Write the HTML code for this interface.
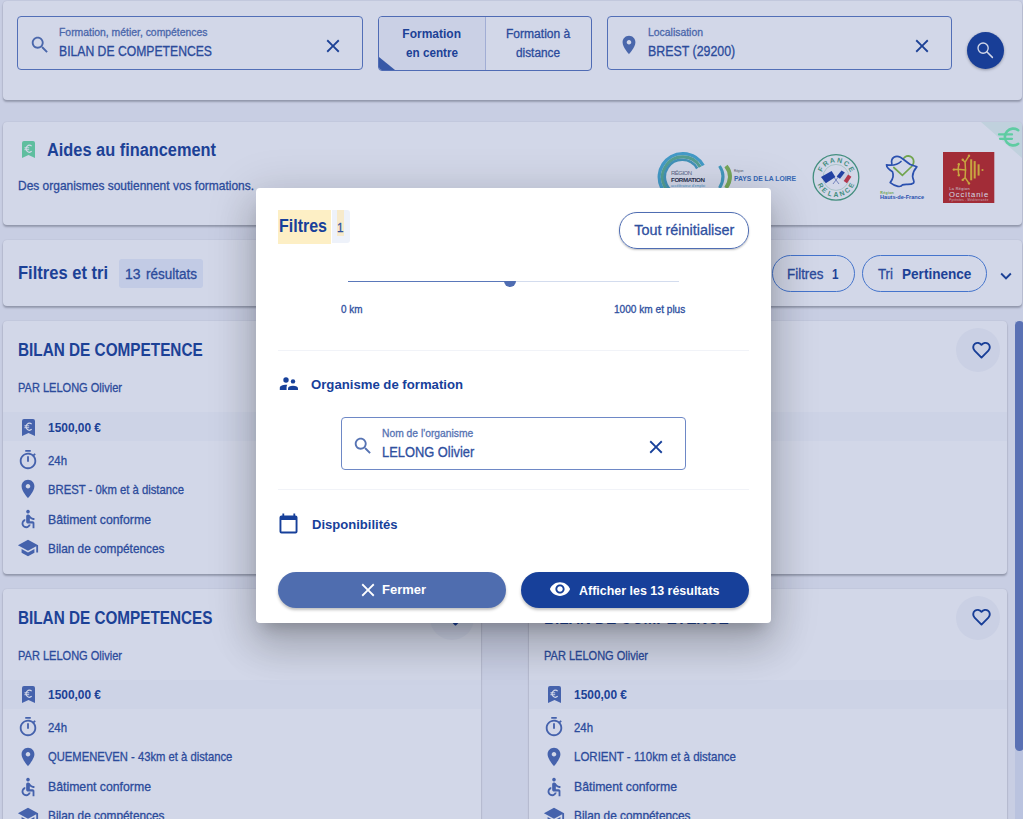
<!DOCTYPE html>
<html><head><meta charset="utf-8"><style>
html,body{margin:0;padding:0;width:1023px;height:819px;overflow:hidden;background:#F3F4F9;font-family:"Liberation Sans",sans-serif;}
.abs,.card,.inp,.pill,.t,.ic{position:absolute;}
.t{white-space:nowrap;transform-origin:0 0;}
.card{background:#FFFFFF;border-radius:4px;box-shadow:0 2px 2px rgba(0,0,0,.26),0 0 1.5px rgba(0,0,0,.14);}
.inp{box-sizing:border-box;border:1px solid #5F7DC2;border-radius:4px;}
.pill{box-sizing:border-box;border:1px solid #4F84DC;border-radius:19px;}
#ov{position:absolute;left:0;top:0;width:1023px;height:819px;background:rgba(30,55,140,.2);}
#modal{position:absolute;left:256px;top:188px;width:515px;height:434.5px;background:#fff;border-radius:4px;
box-shadow:0 11px 15px -7px rgba(0,0,0,.2),0 24px 38px 3px rgba(0,0,0,.14),0 9px 46px 8px rgba(0,0,0,.12);}
</style></head><body>
<div class='card' style='left:3px;top:1px;width:1019px;height:99px'></div><div class='inp' style='left:17px;top:16px;width:346px;height:54px'></div><svg class='ic' style='left:29.40px;top:33.90px;' width='22' height='22' viewBox='0 0 24 24'><path fill='#5673B3' d='M15.5 14h-.79l-.28-.27C15.41 12.59 16 11.11 16 9.5 16 5.91 13.09 3 9.5 3S3 5.91 3 9.5 5.91 16 9.5 16c1.610 0 3.09-.59 4.23-1.57l.27.28v.79l5 4.99L20.49 19l-4.99-5zm-6 0C7.01 14 5 11.99 5 9.5S7.01 5 9.5 5 14 7.01 14 9.5 11.99 14 9.5 14z'/></svg><svg class='ic' style='left:322.00px;top:35.00px;' width='22' height='22' viewBox='0 0 24 24'><path fill='#1C4499' d='M19 6.41L17.59 5 12 10.59 6.41 5 5 6.41 10.59 12 5 17.59 6.41 19 12 13.41 17.59 19 19 17.59 13.41 12z'/></svg><div class='abs' style='left:378px;top:16px;width:214px;height:55px;border:1px solid #5C79BF;border-radius:4px;box-sizing:border-box;overflow:hidden'><div style='position:absolute;left:0;top:0;width:106px;height:100%;background:#F6F7FC;border-right:1px solid #C2CBE6'></div><div style='position:absolute;left:0;bottom:0;width:0;height:0;border-style:solid;border-width:13px 0 0 16px;border-color:transparent transparent transparent #3F62AE'></div></div><div class='inp' style='left:606.5px;top:16px;width:345px;height:54px'></div><svg class='ic' style='left:618.40px;top:34.40px;' width='22' height='22' viewBox='0 0 24 24'><path fill='#5673B3' d='M12 2C8.13 2 5 5.13 5 9c0 5.25 7 13 7 13s7-7.75 7-13c0-3.87-3.13-7-7-7zm0 9.5c-1.38 0-2.5-1.12-2.5-2.5s1.12-2.5 2.5-2.5 2.5 1.12 2.5 2.5-1.12 2.5-2.5 2.5z'/></svg><svg class='ic' style='left:910.70px;top:35.00px;' width='22' height='22' viewBox='0 0 24 24'><path fill='#1C4499' d='M19 6.41L17.59 5 12 10.59 6.41 5 5 6.41 10.59 12 5 17.59 6.41 19 12 13.41 17.59 19 19 17.59 13.41 12z'/></svg><div class='abs' style='left:967px;top:32px;width:37px;height:37px;border-radius:50%;background:#17409A;box-shadow:0 1px 3px rgba(0,0,0,.35)'></div><svg class='ic' style='left:974px;top:40px' width='22' height='22' viewBox='0 0 22 22'><circle cx='9.1' cy='8.1' r='5.1' fill='none' stroke='#fff' stroke-width='1.35'/><path d='M12.8 11.8L18.4 17.4' stroke='#fff' stroke-width='1.5' stroke-linecap='round'/></svg><div class='card' style='left:3px;top:122px;width:1019px;height:103px;overflow:hidden'><div style='position:absolute;right:0;top:0;width:0;height:0;border-style:solid;border-width:0 41px 36px 0;border-color:transparent #E9F8F2 transparent transparent'></div></div><svg class='ic' style='left:996px;top:124px' width='26' height='26' viewBox='0 0 26 26'><path d='M22.2 6.2 A8.4 8.4 0 1 0 22.2 19.8' fill='none' stroke='#6FF2A8' stroke-width='2.6' stroke-linecap='round'/><path d='M3 10.4h13M4 14.8h12' stroke='#6FF2A8' stroke-width='2.3' stroke-linecap='round'/></svg><svg class='ic' style='left:22.00px;top:140.80px' width='13' height='17' viewBox='0 0 13 17'><path fill='#70E0A4' d='M2 0h9a2 2 0 0 1 2 2v15l-6.5-3-6.5 3V2a2 2 0 0 1 2-2z'/><path fill='none' stroke='#fff' stroke-width='1.15' d='M9.7 5.1A3.4 3.4 0 1 0 9.7 10.3'/><path stroke='#fff' stroke-width='0.95' d='M2.4 6.8h4.8M2.4 8.7h4.8'/></svg><svg class='ic' style='left:650px;top:145px' width='60' height='45' viewBox='0 0 60 45'>
<path d='M53.2 20.5 A23.5 23.5 0 1 0 30.3 55.5' fill='none' stroke='#4DB3D6' stroke-width='3.4'/>
<path d='M50.2 22 A20.2 20.2 0 1 0 30.3 52.2' fill='none' stroke='#62B894' stroke-width='3.2'/>
<path d='M47.2 23.5 A17.3 17.3 0 1 0 30.3 49.3' fill='none' stroke='#4BA8C4' stroke-width='2.6'/>
<text x='21' y='29.5' font-family='Liberation Sans' font-size='6' fill='#6A6F80' textLength='21'>RÉGION</text>
<text x='21' y='36.5' font-family='Liberation Sans' font-size='6.2' font-weight='700' fill='#2C3140' textLength='34'>FORMATION</text>
<text x='21' y='41.5' font-family='Liberation Sans' font-size='3.5' fill='#4A9FD0' textLength='34'>accélérateur d'emploi</text>
</svg><svg class='ic' style='left:715px;top:160px' width='85' height='30' viewBox='0 0 85 30'>
<path d='M4.5 6 Q11.5 16 4.5 28' fill='none' stroke='#4AAFC8' stroke-width='3'/>
<path d='M11 6 Q19 16 11 28' fill='none' stroke='#8DC24E' stroke-width='4'/>
<text x='19' y='12' font-family='Liberation Sans' font-size='3' fill='#555'>Région</text>
<text x='19' y='20.6' font-family='Liberation Sans' font-size='7.6' font-weight='700' fill='#3C74BE' textLength='62' lengthAdjust='spacingAndGlyphs'>PAYS DE LA LOIRE</text>
</svg><svg class='ic' style='left:810px;top:151px' width='52' height='52' viewBox='0 0 52 52'>

<circle cx='26' cy='26.4' r='22.8' fill='none' stroke='#4DA57C' stroke-width='1.3'/>
<circle cx='26' cy='26.4' r='13' fill='none' stroke='#A9D6BE' stroke-width='0.6'/>
<text x='12.76' y='19.36' transform='rotate(-62.0 12.76 19.36)' text-anchor='middle' font-family='Liberation Sans' font-size='7.0' font-weight='700' fill='#4DA57C'>F</text><text x='16.93' y='14.45' transform='rotate(-37.2 16.93 14.45)' text-anchor='middle' font-family='Liberation Sans' font-size='7.0' font-weight='700' fill='#4DA57C'>R</text><text x='22.78' y='11.75' transform='rotate(-12.4 22.78 11.75)' text-anchor='middle' font-family='Liberation Sans' font-size='7.0' font-weight='700' fill='#4DA57C'>A</text><text x='29.22' y='11.75' transform='rotate(12.4 29.22 11.75)' text-anchor='middle' font-family='Liberation Sans' font-size='7.0' font-weight='700' fill='#4DA57C'>N</text><text x='35.07' y='14.45' transform='rotate(37.2 35.07 14.45)' text-anchor='middle' font-family='Liberation Sans' font-size='7.0' font-weight='700' fill='#4DA57C'>C</text><text x='39.24' y='19.36' transform='rotate(62.0 39.24 19.36)' text-anchor='middle' font-family='Liberation Sans' font-size='7.0' font-weight='700' fill='#4DA57C'>E</text>
<text x='8.69' y='35.60' transform='rotate(62.0 8.69 35.60)' text-anchor='middle' font-family='Liberation Sans' font-size='6.8' font-weight='700' fill='#4DA57C'>R</text><text x='13.06' y='41.12' transform='rotate(41.3 13.06 41.12)' text-anchor='middle' font-family='Liberation Sans' font-size='6.8' font-weight='700' fill='#4DA57C'>E</text><text x='19.08' y='44.74' transform='rotate(20.7 19.08 44.74)' text-anchor='middle' font-family='Liberation Sans' font-size='6.8' font-weight='700' fill='#4DA57C'>L</text><text x='26.00' y='46.00' transform='rotate(0.0 26.00 46.00)' text-anchor='middle' font-family='Liberation Sans' font-size='6.8' font-weight='700' fill='#4DA57C'>A</text><text x='32.92' y='44.74' transform='rotate(-20.7 32.92 44.74)' text-anchor='middle' font-family='Liberation Sans' font-size='6.8' font-weight='700' fill='#4DA57C'>N</text><text x='38.94' y='41.12' transform='rotate(-41.3 38.94 41.12)' text-anchor='middle' font-family='Liberation Sans' font-size='6.8' font-weight='700' fill='#4DA57C'>C</text><text x='43.31' y='35.60' transform='rotate(-62.0 43.31 35.60)' text-anchor='middle' font-family='Liberation Sans' font-size='6.8' font-weight='700' fill='#4DA57C'>E</text>
<path d='M23 25 L29 33 M29 25 L23 33' stroke='#7F8CC4' stroke-width='0.9'/>
<path d='M11 26 L21.6 19.9 L25.4 26 L15.8 32.2z' fill='#2344A8'/>
<path d='M26.7 25.4 L31.5 19.5 L41.4 25.7 L37 32.2z' fill='#F4F4F6'/>
<path d='M26.7 25.4 L31.5 19.5 L34.8 21.6 L30 27.7z' fill='#2344A8'/>
<path d='M38.1 23.6 L41.4 25.7 L37 32.2 L33.7 30.1z' fill='#D8393E'/>
</svg><svg class='ic' style='left:878px;top:153px' width='50' height='50' viewBox='0 0 50 50'>
<path d='M 15.8 14.5 L 24.4 22.4 L 33.6 13.5 C 37.6 8.9 35.6 3.6 30.3 2.9 C 27.7 2.9 25.7 4.9 25.7 5.6' fill='none' stroke='#86C03F' stroke-width='1.7' stroke-linecap='round'/>
<path d='M 8.5 11.8 C 14.5 12.8 19.8 11.5 23.0 8.5 M 13.8 10.5 C 12.5 4.9 17.8 1.6 22.4 4.3 C 25.7 6.2 29.0 9.5 32.3 11.5 L 38.9 13.8 C 36.9 16.1 34.9 18.1 34.6 23.4 C 34.9 26.7 36.9 28.6 35.6 30.0 C 32.3 32.6 27.7 30.6 24.4 31.9 C 23.0 34.6 17.8 33.9 12.2 29.6 C 15.1 26.0 15.8 22.0 14.5 18.8 C 11.2 16.8 8.5 14.8 8.5 11.8' fill='none' stroke='#2E57B8' stroke-width='1.7' stroke-linejoin='round' stroke-linecap='round'/>
<text x='2.3' y='40.6' font-family='Liberation Sans' font-size='3.6' font-weight='700' fill='#86C03F' textLength='13.5'>Région</text>
<text x='2' y='46.4' font-family='Liberation Sans' font-size='5.6' font-weight='700' fill='#2E57B8' textLength='44'>Hauts-de-France</text>
</svg><svg class='ic' style='left:943px;top:152px' width='52' height='52' viewBox='0 0 52 52'>
<rect width='51.3' height='51' fill='#C42A22'/>
<g fill='none' stroke='#F2C22E' stroke-width='1.5' stroke-linecap='round' stroke-linejoin='round'>
<path d='M22.5 18 L22.1 10.2 L19.7 7.7 M22.1 10.2 L26 3.8'/>
<path d='M22.5 18 L15.1 17.2 L15.8 12.3 M15.1 17.2 L10.8 17.6 M15.1 17.2 L15.8 23.3'/>
<path d='M22.5 18 L22.1 25.7 L19.7 27.9 M22.1 25.7 L26 31.4'/>
</g>
<g fill='#F2C22E'><circle cx='19.7' cy='7.7' r='1.2'/><circle cx='26' cy='3.8' r='1.2'/><circle cx='15.8' cy='12.3' r='1.2'/><circle cx='10.8' cy='17.6' r='1.2'/><circle cx='15.8' cy='23.3' r='1.2'/><circle cx='19.7' cy='27.9' r='1.2'/><circle cx='26' cy='31.4' r='1.2'/><circle cx='39.5' cy='18' r='1.1'/>
<rect x='27.2' y='7.3' width='2' height='21'/><rect x='30.7' y='9.1' width='2' height='17.4'/><rect x='34.6' y='12.3' width='2' height='11.3'/></g>
<text x='6.2' y='37.8' font-family='Liberation Sans' font-size='3.8' fill='#F3E6E2' textLength='20.5'>La Région</text>
<text x='6' y='44.9' font-family='Liberation Sans' font-size='7.6' fill='#FFFFFF' textLength='39.2'>Occitanie</text>
<text x='6.2' y='48.6' font-family='Liberation Sans' font-size='2.8' fill='#F3D6D2' textLength='39'>Pyrénées - Méditerranée</text>
</svg><div class='card' style='left:3px;top:240px;width:1019px;height:66px'></div><div class='abs' style='left:119px;top:259px;width:84px;height:28.8px;background:#EBF0FC;border-radius:3px'></div><div class='pill' style='left:771.6px;top:255px;width:83px;height:36.6px'></div><div class='pill' style='left:862px;top:255px;width:125px;height:36.6px'></div><svg class='ic' style='left:994.50px;top:264.60px;' width='22' height='22' viewBox='0 0 24 24'><path fill='#1C4499' d='M16.59 8.59L12 13.17 7.41 8.59 6 10l6 6 6-6z'/></svg><div class='card' style='left:3px;top:321.4px;width:478px;height:252.5px;overflow:hidden'><div style='position:absolute;left:0;top:91px;width:100%;height:29px;background:#F9FAFD'></div></div><div class='abs' style='left:430.2px;top:328.29999999999995px;width:44px;height:44px;border-radius:50%;background:#F6F7FB'></div><svg class='ic' style='left:446.0px;top:341.0px' width='19' height='18' viewBox='0 0 19 18'><path fill='none' stroke='#17409A' stroke-width='1.9' stroke-linejoin='round' d='M9.5 16.6L2.6 9.6C0.6 7.6 0.8 4.4 2.9 2.8 4.9 1.3 7.7 1.7 9.5 3.8 11.3 1.7 14.1 1.3 16.1 2.8 18.2 4.4 18.4 7.6 16.4 9.6z'/></svg><svg class='ic' style='left:22.00px;top:418.70px' width='13' height='17' viewBox='0 0 13 17'><path fill='#4F6DB5' d='M2 0h9a2 2 0 0 1 2 2v15l-6.5-3-6.5 3V2a2 2 0 0 1 2-2z'/><path fill='none' stroke='#fff' stroke-width='1.15' d='M9.7 5.1A3.4 3.4 0 1 0 9.7 10.3'/><path stroke='#fff' stroke-width='0.95' d='M2.4 6.8h4.8M2.4 8.7h4.8'/></svg><svg class='ic' style='left:17.00px;top:448.90px;' width='22' height='22' viewBox='0 0 24 24'><path fill='#4F6DB5' d='M15 1H9v2h6V1zm-4 13h2V8h-2v6zm8.03-6.61l1.42-1.42c-.43-.51-.9-.99-1.41-1.41l-1.42 1.42C16.07 4.74 14.12 4 12 4c-4.970 0-9 4.03-9 9s4.02 9 9 9 9-4.03 9-9c0-2.12-.74-4.07-1.97-5.61zM12 20c-3.87 0-7-3.13-7-7s3.13-7 7-7 7 3.13 7 7-3.13 7-7 7z'/></svg><svg class='ic' style='left:17.00px;top:478.30px;' width='22' height='22' viewBox='0 0 24 24'><path fill='#4F6DB5' d='M12 2C8.13 2 5 5.13 5 9c0 5.25 7 13 7 13s7-7.75 7-13c0-3.87-3.13-7-7-7zm0 9.5c-1.38 0-2.5-1.12-2.5-2.5s1.12-2.5 2.5-2.5 2.5 1.12 2.5 2.5-1.12 2.5-2.5 2.5z'/></svg><svg class='ic' style='left:17.00px;top:508.20px;' width='22' height='22' viewBox='0 0 24 24'><path fill='#4F6DB5' d='M12 2a2 2 0 1 0 0.001 0zM19 13v-2c-1.54.02-3.09-.75-4.07-1.83l-1.29-1.43c-.17-.19-.38-.34-.61-.45-.01 0-.01-.01-.02-.01H13c-.35-.2-.75-.3-1.19-.26C10.76 7.11 10 8.04 10 9.09V15c0 1.1.9 2 2 2h5v5h2v-5.5c0-1.1-.9-2-2-2h-3v-3.45c1.29 1.07 3.25 1.94 5 1.95zm-6.17 5c-.41 1.16-1.52 2-2.830 2-1.66 0-3-1.34-3-3 0-1.31.84-2.41 2-2.83V12.1c-2.28.46-4 2.48-4 4.9 0 2.76 2.24 5 5 5 2.42 0 4.44-1.72 4.9-4h-2.07z'/></svg><svg class='ic' style='left:17.00px;top:537.30px;' width='22' height='22' viewBox='0 0 24 24'><path fill='#4F6DB5' d='M5 13.18v4L12 21l7-3.82v-4L12 17l-7-3.82zM12 3L1 9l11 6 9-4.91V17h2V9L12 3z'/></svg><div class='card' style='left:529px;top:321.4px;width:478px;height:252.5px;overflow:hidden'><div style='position:absolute;left:0;top:91px;width:100%;height:29px;background:#F9FAFD'></div></div><div class='abs' style='left:956.2px;top:328.29999999999995px;width:44px;height:44px;border-radius:50%;background:#F6F7FB'></div><svg class='ic' style='left:972.0px;top:341.0px' width='19' height='18' viewBox='0 0 19 18'><path fill='none' stroke='#17409A' stroke-width='1.9' stroke-linejoin='round' d='M9.5 16.6L2.6 9.6C0.6 7.6 0.8 4.4 2.9 2.8 4.9 1.3 7.7 1.7 9.5 3.8 11.3 1.7 14.1 1.3 16.1 2.8 18.2 4.4 18.4 7.6 16.4 9.6z'/></svg><svg class='ic' style='left:548.00px;top:418.70px' width='13' height='17' viewBox='0 0 13 17'><path fill='#4F6DB5' d='M2 0h9a2 2 0 0 1 2 2v15l-6.5-3-6.5 3V2a2 2 0 0 1 2-2z'/><path fill='none' stroke='#fff' stroke-width='1.15' d='M9.7 5.1A3.4 3.4 0 1 0 9.7 10.3'/><path stroke='#fff' stroke-width='0.95' d='M2.4 6.8h4.8M2.4 8.7h4.8'/></svg><svg class='ic' style='left:543.00px;top:448.90px;' width='22' height='22' viewBox='0 0 24 24'><path fill='#4F6DB5' d='M15 1H9v2h6V1zm-4 13h2V8h-2v6zm8.03-6.61l1.42-1.42c-.43-.51-.9-.99-1.41-1.41l-1.42 1.42C16.07 4.74 14.12 4 12 4c-4.970 0-9 4.03-9 9s4.02 9 9 9 9-4.03 9-9c0-2.12-.74-4.07-1.97-5.61zM12 20c-3.87 0-7-3.13-7-7s3.13-7 7-7 7 3.13 7 7-3.13 7-7 7z'/></svg><svg class='ic' style='left:543.00px;top:478.30px;' width='22' height='22' viewBox='0 0 24 24'><path fill='#4F6DB5' d='M12 2C8.13 2 5 5.13 5 9c0 5.25 7 13 7 13s7-7.75 7-13c0-3.87-3.13-7-7-7zm0 9.5c-1.38 0-2.5-1.12-2.5-2.5s1.12-2.5 2.5-2.5 2.5 1.12 2.5 2.5-1.12 2.5-2.5 2.5z'/></svg><svg class='ic' style='left:543.00px;top:508.20px;' width='22' height='22' viewBox='0 0 24 24'><path fill='#4F6DB5' d='M12 2a2 2 0 1 0 0.001 0zM19 13v-2c-1.54.02-3.09-.75-4.07-1.83l-1.29-1.43c-.17-.19-.38-.34-.61-.45-.01 0-.01-.01-.02-.01H13c-.35-.2-.75-.3-1.19-.26C10.76 7.11 10 8.04 10 9.09V15c0 1.1.9 2 2 2h5v5h2v-5.5c0-1.1-.9-2-2-2h-3v-3.45c1.29 1.07 3.25 1.94 5 1.95zm-6.17 5c-.41 1.16-1.52 2-2.830 2-1.66 0-3-1.34-3-3 0-1.31.84-2.41 2-2.83V12.1c-2.28.46-4 2.48-4 4.9 0 2.76 2.24 5 5 5 2.42 0 4.44-1.72 4.9-4h-2.07z'/></svg><svg class='ic' style='left:543.00px;top:537.30px;' width='22' height='22' viewBox='0 0 24 24'><path fill='#4F6DB5' d='M5 13.18v4L12 21l7-3.82v-4L12 17l-7-3.82zM12 3L1 9l11 6 9-4.91V17h2V9L12 3z'/></svg><div class='card' style='left:3px;top:588.8px;width:478px;height:252.5px;overflow:hidden'><div style='position:absolute;left:0;top:91px;width:100%;height:29px;background:#F9FAFD'></div></div><div class='abs' style='left:430.2px;top:595.6999999999999px;width:44px;height:44px;border-radius:50%;background:#F6F7FB'></div><svg class='ic' style='left:446.0px;top:608.4px' width='19' height='18' viewBox='0 0 19 18'><path fill='none' stroke='#17409A' stroke-width='1.9' stroke-linejoin='round' d='M9.5 16.6L2.6 9.6C0.6 7.6 0.8 4.4 2.9 2.8 4.9 1.3 7.7 1.7 9.5 3.8 11.3 1.7 14.1 1.3 16.1 2.8 18.2 4.4 18.4 7.6 16.4 9.6z'/></svg><svg class='ic' style='left:22.00px;top:686.10px' width='13' height='17' viewBox='0 0 13 17'><path fill='#4F6DB5' d='M2 0h9a2 2 0 0 1 2 2v15l-6.5-3-6.5 3V2a2 2 0 0 1 2-2z'/><path fill='none' stroke='#fff' stroke-width='1.15' d='M9.7 5.1A3.4 3.4 0 1 0 9.7 10.3'/><path stroke='#fff' stroke-width='0.95' d='M2.4 6.8h4.8M2.4 8.7h4.8'/></svg><svg class='ic' style='left:17.00px;top:716.30px;' width='22' height='22' viewBox='0 0 24 24'><path fill='#4F6DB5' d='M15 1H9v2h6V1zm-4 13h2V8h-2v6zm8.03-6.61l1.42-1.42c-.43-.51-.9-.99-1.41-1.41l-1.42 1.42C16.07 4.74 14.12 4 12 4c-4.970 0-9 4.03-9 9s4.02 9 9 9 9-4.03 9-9c0-2.12-.74-4.07-1.97-5.61zM12 20c-3.87 0-7-3.13-7-7s3.13-7 7-7 7 3.13 7 7-3.13 7-7 7z'/></svg><svg class='ic' style='left:17.00px;top:745.70px;' width='22' height='22' viewBox='0 0 24 24'><path fill='#4F6DB5' d='M12 2C8.13 2 5 5.13 5 9c0 5.25 7 13 7 13s7-7.75 7-13c0-3.87-3.13-7-7-7zm0 9.5c-1.38 0-2.5-1.12-2.5-2.5s1.12-2.5 2.5-2.5 2.5 1.12 2.5 2.5-1.12 2.5-2.5 2.5z'/></svg><svg class='ic' style='left:17.00px;top:775.60px;' width='22' height='22' viewBox='0 0 24 24'><path fill='#4F6DB5' d='M12 2a2 2 0 1 0 0.001 0zM19 13v-2c-1.54.02-3.09-.75-4.07-1.83l-1.29-1.43c-.17-.19-.38-.34-.61-.45-.01 0-.01-.01-.02-.01H13c-.35-.2-.75-.3-1.19-.26C10.76 7.11 10 8.04 10 9.09V15c0 1.1.9 2 2 2h5v5h2v-5.5c0-1.1-.9-2-2-2h-3v-3.45c1.29 1.07 3.25 1.94 5 1.95zm-6.17 5c-.41 1.16-1.52 2-2.830 2-1.66 0-3-1.34-3-3 0-1.31.84-2.41 2-2.83V12.1c-2.28.46-4 2.48-4 4.9 0 2.76 2.24 5 5 5 2.42 0 4.44-1.72 4.9-4h-2.07z'/></svg><svg class='ic' style='left:17.00px;top:804.70px;' width='22' height='22' viewBox='0 0 24 24'><path fill='#4F6DB5' d='M5 13.18v4L12 21l7-3.82v-4L12 17l-7-3.82zM12 3L1 9l11 6 9-4.91V17h2V9L12 3z'/></svg><div class='card' style='left:529px;top:588.8px;width:478px;height:252.5px;overflow:hidden'><div style='position:absolute;left:0;top:91px;width:100%;height:29px;background:#F9FAFD'></div></div><div class='abs' style='left:956.2px;top:595.6999999999999px;width:44px;height:44px;border-radius:50%;background:#F6F7FB'></div><svg class='ic' style='left:972.0px;top:608.4px' width='19' height='18' viewBox='0 0 19 18'><path fill='none' stroke='#17409A' stroke-width='1.9' stroke-linejoin='round' d='M9.5 16.6L2.6 9.6C0.6 7.6 0.8 4.4 2.9 2.8 4.9 1.3 7.7 1.7 9.5 3.8 11.3 1.7 14.1 1.3 16.1 2.8 18.2 4.4 18.4 7.6 16.4 9.6z'/></svg><svg class='ic' style='left:548.00px;top:686.10px' width='13' height='17' viewBox='0 0 13 17'><path fill='#4F6DB5' d='M2 0h9a2 2 0 0 1 2 2v15l-6.5-3-6.5 3V2a2 2 0 0 1 2-2z'/><path fill='none' stroke='#fff' stroke-width='1.15' d='M9.7 5.1A3.4 3.4 0 1 0 9.7 10.3'/><path stroke='#fff' stroke-width='0.95' d='M2.4 6.8h4.8M2.4 8.7h4.8'/></svg><svg class='ic' style='left:543.00px;top:716.30px;' width='22' height='22' viewBox='0 0 24 24'><path fill='#4F6DB5' d='M15 1H9v2h6V1zm-4 13h2V8h-2v6zm8.03-6.61l1.42-1.42c-.43-.51-.9-.99-1.41-1.41l-1.42 1.42C16.07 4.74 14.12 4 12 4c-4.970 0-9 4.03-9 9s4.02 9 9 9 9-4.03 9-9c0-2.12-.74-4.07-1.97-5.61zM12 20c-3.87 0-7-3.13-7-7s3.13-7 7-7 7 3.13 7 7-3.13 7-7 7z'/></svg><svg class='ic' style='left:543.00px;top:745.70px;' width='22' height='22' viewBox='0 0 24 24'><path fill='#4F6DB5' d='M12 2C8.13 2 5 5.13 5 9c0 5.25 7 13 7 13s7-7.75 7-13c0-3.87-3.13-7-7-7zm0 9.5c-1.38 0-2.5-1.12-2.5-2.5s1.12-2.5 2.5-2.5 2.5 1.12 2.5 2.5-1.12 2.5-2.5 2.5z'/></svg><svg class='ic' style='left:543.00px;top:775.60px;' width='22' height='22' viewBox='0 0 24 24'><path fill='#4F6DB5' d='M12 2a2 2 0 1 0 0.001 0zM19 13v-2c-1.54.02-3.09-.75-4.07-1.83l-1.29-1.43c-.17-.19-.38-.34-.61-.45-.01 0-.01-.01-.02-.01H13c-.35-.2-.75-.3-1.19-.26C10.76 7.11 10 8.04 10 9.09V15c0 1.1.9 2 2 2h5v5h2v-5.5c0-1.1-.9-2-2-2h-3v-3.45c1.29 1.07 3.25 1.94 5 1.95zm-6.17 5c-.41 1.16-1.52 2-2.830 2-1.66 0-3-1.34-3-3 0-1.31.84-2.41 2-2.83V12.1c-2.28.46-4 2.48-4 4.9 0 2.76 2.24 5 5 5 2.42 0 4.44-1.72 4.9-4h-2.07z'/></svg><svg class='ic' style='left:543.00px;top:804.70px;' width='22' height='22' viewBox='0 0 24 24'><path fill='#4F6DB5' d='M5 13.18v4L12 21l7-3.82v-4L12 17l-7-3.82zM12 3L1 9l11 6 9-4.91V17h2V9L12 3z'/></svg><div class='abs' style='left:1015px;top:321px;width:8px;height:498px;background:#E2E6F4'></div><div class='abs' style='left:1015px;top:321px;width:9px;height:430px;background:#6A80BE;border-radius:4.5px'></div>
<div class='t' style='left:59.0px;top:26.00px;font-size:10.6px;line-height:13.00px;font-weight:400;color:#5673B3;transform:scaleX(0.9813);-webkit-text-stroke:0.3px currentColor;'>Formation, métier, compétences</div>
<div class='t' style='left:59.0px;top:44.00px;font-size:13.8px;line-height:16.00px;font-weight:400;color:#2F509F;transform:scaleX(0.8830);-webkit-text-stroke:0.3px currentColor;'>BILAN DE COMPETENCES</div>
<div class='t' style='left:402.3px;top:27.00px;font-size:12px;line-height:15.00px;font-weight:700;color:#1C4499;'>Formation</div>
<div class='t' style='left:405.5px;top:46.00px;font-size:12px;line-height:15.00px;font-weight:700;color:#1C4499;transform:scaleX(0.9745);'>en centre</div>
<div class='t' style='left:505.6px;top:27.00px;font-size:12px;line-height:15.00px;font-weight:400;color:#2F509F;transform:scaleX(1.0042);-webkit-text-stroke:0.3px currentColor;'>Formation à</div>
<div class='t' style='left:515.9px;top:46.00px;font-size:12px;line-height:15.00px;font-weight:400;color:#2F509F;transform:scaleX(0.9843);-webkit-text-stroke:0.3px currentColor;'>distance</div>
<div class='t' style='left:648.0px;top:26.00px;font-size:10.6px;line-height:13.00px;font-weight:400;color:#5673B3;transform:scaleX(0.9830);-webkit-text-stroke:0.3px currentColor;'>Localisation</div>
<div class='t' style='left:648.0px;top:44.00px;font-size:13.8px;line-height:16.00px;font-weight:400;color:#2F509F;transform:scaleX(0.8977);-webkit-text-stroke:0.3px currentColor;'>BREST (29200)</div>
<div class='t' style='left:47.0px;top:140.00px;font-size:18px;line-height:21.00px;font-weight:700;color:#1C4499;transform:scaleX(0.9084);'>Aides au financement</div>
<div class='t' style='left:17.8px;top:179.00px;font-size:12.6px;line-height:15.00px;font-weight:400;color:#2F509F;transform:scaleX(0.9497);-webkit-text-stroke:0.3px currentColor;'>Des organismes soutiennent vos formations.</div>
<div class='t' style='left:17.8px;top:263.00px;font-size:18px;line-height:21.00px;font-weight:700;color:#1C4499;transform:scaleX(0.9181);'>Filtres et tri</div>
<div class='t' style='left:124.5px;top:266.00px;font-size:14px;line-height:17.00px;font-weight:400;color:#2F509F;transform:scaleX(0.9950);-webkit-text-stroke:0.3px currentColor;'>13</div>
<div class='t' style='left:146.0px;top:266.00px;font-size:14px;line-height:17.00px;font-weight:400;color:#2F509F;transform:scaleX(0.9637);-webkit-text-stroke:0.3px currentColor;'>résultats</div>
<div class='t' style='left:786.5px;top:266.00px;font-size:14px;line-height:17.00px;font-weight:400;color:#2F509F;transform:scaleX(0.9574);-webkit-text-stroke:0.3px currentColor;'>Filtres</div>
<div class='t' style='left:832.0px;top:266.00px;font-size:14px;line-height:17.00px;font-weight:700;color:#1C4499;transform:scaleX(0.8337);'>1</div>
<div class='t' style='left:878.0px;top:266.00px;font-size:14px;line-height:17.00px;font-weight:400;color:#2F509F;transform:scaleX(0.9486);-webkit-text-stroke:0.3px currentColor;'>Tri</div>
<div class='t' style='left:901.6px;top:266.00px;font-size:14px;line-height:17.00px;font-weight:700;color:#1C4499;transform:scaleX(0.9694);'>Pertinence</div>
<div class='t' style='left:17.8px;top:340.00px;font-size:17.6px;line-height:21.00px;font-weight:700;color:#1C4499;transform:scaleX(0.8707);'>BILAN DE COMPETENCE</div>
<div class='t' style='left:17.8px;top:381.00px;font-size:12.4px;line-height:15.00px;font-weight:400;color:#2F509F;transform:scaleX(0.8902);-webkit-text-stroke:0.3px currentColor;'>PAR LELONG Olivier</div>
<div class='t' style='left:47.5px;top:421.00px;font-size:12.4px;line-height:15.00px;font-weight:700;color:#1C4499;transform:scaleX(0.9615);'>1500,00 €</div>
<div class='t' style='left:47.5px;top:454.00px;font-size:12.6px;line-height:15.00px;font-weight:400;color:#2F509F;transform:scaleX(0.9041);-webkit-text-stroke:0.3px currentColor;'>24h</div>
<div class='t' style='left:47.5px;top:483.00px;font-size:12.6px;line-height:15.00px;font-weight:400;color:#2F509F;transform:scaleX(0.8968);-webkit-text-stroke:0.3px currentColor;'>BREST - 0km et à distance</div>
<div class='t' style='left:47.5px;top:513.00px;font-size:12.6px;line-height:15.00px;font-weight:400;color:#2F509F;transform:scaleX(0.9744);-webkit-text-stroke:0.3px currentColor;'>Bâtiment conforme</div>
<div class='t' style='left:47.5px;top:542.00px;font-size:12.6px;line-height:15.00px;font-weight:400;color:#2F509F;transform:scaleX(0.9401);-webkit-text-stroke:0.3px currentColor;'>Bilan de compétences</div>
<div class='t' style='left:543.8px;top:340.00px;font-size:17.6px;line-height:21.00px;font-weight:700;color:#1C4499;transform:scaleX(0.8684);'>BILAN DE COMPETENCES</div>
<div class='t' style='left:543.8px;top:381.00px;font-size:12.4px;line-height:15.00px;font-weight:400;color:#2F509F;transform:scaleX(0.8902);-webkit-text-stroke:0.3px currentColor;'>PAR LELONG Olivier</div>
<div class='t' style='left:573.5px;top:421.00px;font-size:12.4px;line-height:15.00px;font-weight:700;color:#1C4499;transform:scaleX(0.9615);'>1500,00 €</div>
<div class='t' style='left:573.5px;top:454.00px;font-size:12.6px;line-height:15.00px;font-weight:400;color:#2F509F;transform:scaleX(0.9041);-webkit-text-stroke:0.3px currentColor;'>24h</div>
<div class='t' style='left:573.5px;top:483.00px;font-size:12.6px;line-height:15.00px;font-weight:400;color:#2F509F;transform:scaleX(0.9330);-webkit-text-stroke:0.3px currentColor;'>PARIS - 500km et à distance</div>
<div class='t' style='left:573.5px;top:513.00px;font-size:12.6px;line-height:15.00px;font-weight:400;color:#2F509F;transform:scaleX(0.9744);-webkit-text-stroke:0.3px currentColor;'>Bâtiment conforme</div>
<div class='t' style='left:573.5px;top:542.00px;font-size:12.6px;line-height:15.00px;font-weight:400;color:#2F509F;transform:scaleX(0.9401);-webkit-text-stroke:0.3px currentColor;'>Bilan de compétences</div>
<div class='t' style='left:17.8px;top:608.00px;font-size:17.6px;line-height:21.00px;font-weight:700;color:#1C4499;transform:scaleX(0.8684);'>BILAN DE COMPETENCES</div>
<div class='t' style='left:17.8px;top:649.00px;font-size:12.4px;line-height:15.00px;font-weight:400;color:#2F509F;transform:scaleX(0.8902);-webkit-text-stroke:0.3px currentColor;'>PAR LELONG Olivier</div>
<div class='t' style='left:47.5px;top:688.00px;font-size:12.4px;line-height:15.00px;font-weight:700;color:#1C4499;transform:scaleX(0.9615);'>1500,00 €</div>
<div class='t' style='left:47.5px;top:721.00px;font-size:12.6px;line-height:15.00px;font-weight:400;color:#2F509F;transform:scaleX(0.9041);-webkit-text-stroke:0.3px currentColor;'>24h</div>
<div class='t' style='left:47.5px;top:750.00px;font-size:12.6px;line-height:15.00px;font-weight:400;color:#2F509F;transform:scaleX(0.8926);-webkit-text-stroke:0.3px currentColor;'>QUEMENEVEN - 43km et à distance</div>
<div class='t' style='left:47.5px;top:780.00px;font-size:12.6px;line-height:15.00px;font-weight:400;color:#2F509F;transform:scaleX(0.9744);-webkit-text-stroke:0.3px currentColor;'>Bâtiment conforme</div>
<div class='t' style='left:47.5px;top:809.00px;font-size:12.6px;line-height:15.00px;font-weight:400;color:#2F509F;transform:scaleX(0.9401);-webkit-text-stroke:0.3px currentColor;'>Bilan de compétences</div>
<div class='t' style='left:543.8px;top:608.00px;font-size:17.6px;line-height:21.00px;font-weight:700;color:#1C4499;transform:scaleX(0.8707);'>BILAN DE COMPETENCE</div>
<div class='t' style='left:543.8px;top:649.00px;font-size:12.4px;line-height:15.00px;font-weight:400;color:#2F509F;transform:scaleX(0.8902);-webkit-text-stroke:0.3px currentColor;'>PAR LELONG Olivier</div>
<div class='t' style='left:573.5px;top:688.00px;font-size:12.4px;line-height:15.00px;font-weight:700;color:#1C4499;transform:scaleX(0.9615);'>1500,00 €</div>
<div class='t' style='left:573.5px;top:721.00px;font-size:12.6px;line-height:15.00px;font-weight:400;color:#2F509F;transform:scaleX(0.9041);-webkit-text-stroke:0.3px currentColor;'>24h</div>
<div class='t' style='left:573.5px;top:750.00px;font-size:12.6px;line-height:15.00px;font-weight:400;color:#2F509F;transform:scaleX(0.9136);-webkit-text-stroke:0.3px currentColor;'>LORIENT - 110km et à distance</div>
<div class='t' style='left:573.5px;top:780.00px;font-size:12.6px;line-height:15.00px;font-weight:400;color:#2F509F;transform:scaleX(0.9744);-webkit-text-stroke:0.3px currentColor;'>Bâtiment conforme</div>
<div class='t' style='left:573.5px;top:809.00px;font-size:12.6px;line-height:15.00px;font-weight:400;color:#2F509F;transform:scaleX(0.9401);-webkit-text-stroke:0.3px currentColor;'>Bilan de compétences</div>
<div id="ov"></div>
<div id="modal">
<div class='abs' style='left:22px;top:22px;width:53px;height:33.5px;background:#FDEFC5'></div><div class='abs' style='left:75.7px;top:22px;width:18.3px;height:33px;background:#EEF2FA;border-radius:0 3px 3px 0'></div><div class='abs' style='left:81px;top:22px;width:7px;height:25.7px;background:#F7EACB'></div><div class='abs' style='left:363px;top:24px;width:130px;height:36.5px;box-sizing:border-box;border:1.5px solid #4F6DB2;border-radius:18px;box-shadow:0 1px 2px rgba(0,0,0,.25)'></div><div class='abs' style='left:92px;top:92.5px;width:162px;height:1.2px;background:#5A78BA'></div><div class='abs' style='left:254px;top:92.5px;width:169px;height:1.2px;background:#D3DCEE'></div><div class='abs' style='left:248px;top:87px;width:12px;height:12px;border-radius:50%;background:#4F6DB2;clip-path:inset(6px 0 0 0)'></div><div class='abs' style='left:22px;top:161.5px;width:471px;height:1px;background:#F1F3F8'></div><div class='abs' style='left:22px;top:301px;width:471px;height:1px;background:#F1F3F8'></div><svg class='ic' style='left:23px;top:188px' width='20' height='15' viewBox='0 0 20 15'>
<circle cx='7' cy='4' r='2.7' fill='#17409A'/><circle cx='14' cy='5.4' r='2.2' fill='#17409A'/>
<path d='M0.8 14 V12 C0.8 10 3 9 7.8 8.8 L8.3 8.8 C7.4 9.8 7.6 11.5 7.6 14z' fill='#17409A'/>
<path d='M9 14 V12.5 C9 10.6 11 9.8 14 9.8 S19 10.6 19 12.5 V14z' fill='#17409A'/></svg><div class='abs' style='left:84.8px;top:229.3px;width:345px;height:53.2px;box-sizing:border-box;border:1px solid #6E88C6;border-radius:4px'></div><svg class='ic' style='left:96.25px;top:247.25px;' width='22' height='22' viewBox='0 0 24 24'><path fill='#5673B3' d='M15.5 14h-.79l-.28-.27C15.41 12.59 16 11.11 16 9.5 16 5.91 13.09 3 9.5 3S3 5.91 3 9.5 5.91 16 9.5 16c1.610 0 3.09-.59 4.23-1.57l.27.28v.79l5 4.99L20.49 19l-4.99-5zm-6 0C7.01 14 5 11.99 5 9.5S7.01 5 9.5 5 14 7.01 14 9.5 11.99 14 9.5 14z'/></svg><svg class='ic' style='left:388.90px;top:247.60px;' width='22' height='22' viewBox='0 0 24 24'><path fill='#17409A' d='M19 6.41L17.59 5 12 10.59 6.41 5 5 6.41 10.59 12 5 17.59 6.41 19 12 13.41 17.59 19 19 17.59 13.41 12z'/></svg><svg class='ic' style='left:23px;top:325px' width='19' height='21' viewBox='0 0 19 21'>
<path d='M4.3 0.5 V3 M15.3 0.5 V3' stroke='#17409A' stroke-width='1.8'/>
<path d='M2.5 2.5 H16.5 A2 2 0 0 1 18.5 4.5 V18.5 A2 2 0 0 1 16.5 20.5 H2.5 A2 2 0 0 1 0.5 18.5 V4.5 A2 2 0 0 1 2.5 2.5z M2.4 7 V18.6 H16.6 V7z' fill='#17409A' fill-rule='evenodd'/></svg><div class='abs' style='left:22px;top:383.5px;width:228px;height:36.2px;border-radius:18px;background:#4F6DAF;box-shadow:0 2px 3px rgba(0,0,0,.25)'></div><div class='abs' style='left:265px;top:383.7px;width:228px;height:36.3px;border-radius:18px;background:#17409A;box-shadow:0 2px 3px rgba(0,0,0,.25)'></div><svg class='ic' style='left:101.10px;top:390.90px;' width='22' height='22' viewBox='0 0 24 24'><path fill='#FFFFFF' d='M19 6.41L17.59 5 12 10.59 6.41 5 5 6.41 10.59 12 5 17.59 6.41 19 12 13.41 17.59 19 19 17.59 13.41 12z'/></svg><svg class='ic' style='left:293.30px;top:389.50px;' width='22' height='22' viewBox='0 0 24 24'><path fill='#FFFFFF' d='M12 4.5C7 4.5 2.73 7.61 1 12c1.730 4.39 6 7.5 11 7.5s9.27-3.11 11-7.5c-1.73-4.39-6-7.5-11-7.5zM12 17c-2.76 0-5-2.24-5-5s2.24-5 5-5 5 2.24 5 5-2.24 5-5 5zm0-8c-1.66 0-3 1.34-3 3s1.34 3 3 3 3-1.34 3-3-1.34-3-3-3z'/></svg>
<div class='t' style='left:22.5px;top:28.00px;font-size:17.8px;line-height:21.00px;font-weight:700;color:#17409A;transform:scaleX(0.8993);'>Filtres</div>
<div class='t' style='left:81.2px;top:32.00px;font-size:13px;line-height:16.00px;font-weight:400;color:#2F509F;transform:scaleX(0.8985);-webkit-text-stroke:0.3px currentColor;'>1</div>
<div class='t' style='left:378.3px;top:34.00px;font-size:14.4px;line-height:17.00px;font-weight:400;color:#2F509F;-webkit-text-stroke:0.3px currentColor;'>Tout réinitialiser</div>
<div class='t' style='left:84.5px;top:116.00px;font-size:10px;line-height:12.00px;font-weight:400;color:#2F509F;transform:scaleX(0.9921);-webkit-text-stroke:0.3px currentColor;'>0 km</div>
<div class='t' style='left:358.4px;top:116.00px;font-size:10px;line-height:12.00px;font-weight:400;color:#2F509F;transform:scaleX(1.0098);-webkit-text-stroke:0.3px currentColor;'>1000 km et plus</div>
<div class='t' style='left:55.2px;top:189.00px;font-size:13.4px;line-height:16.00px;font-weight:700;color:#17409A;transform:scaleX(0.9821);'>Organisme de formation</div>
<div class='t' style='left:126.4px;top:239.00px;font-size:10.6px;line-height:13.00px;font-weight:400;color:#5673B3;transform:scaleX(0.9726);-webkit-text-stroke:0.3px currentColor;'>Nom de l'organisme</div>
<div class='t' style='left:126.4px;top:257.00px;font-size:13.8px;line-height:16.00px;font-weight:400;color:#2F509F;transform:scaleX(0.9332);-webkit-text-stroke:0.3px currentColor;'>LELONG Olivier</div>
<div class='t' style='left:55.8px;top:329.00px;font-size:13.4px;line-height:16.00px;font-weight:700;color:#17409A;transform:scaleX(0.9750);'>Disponibilités</div>
<div class='t' style='left:126.4px;top:394.00px;font-size:13.6px;line-height:16.00px;font-weight:700;color:#FFFFFF;transform:scaleX(0.9546);'>Fermer</div>
<div class='t' style='left:323.2px;top:395.00px;font-size:13.4px;line-height:16.00px;font-weight:700;color:#FFFFFF;transform:scaleX(0.9299);'>Afficher les 13 résultats</div>
</div>
</body></html>
